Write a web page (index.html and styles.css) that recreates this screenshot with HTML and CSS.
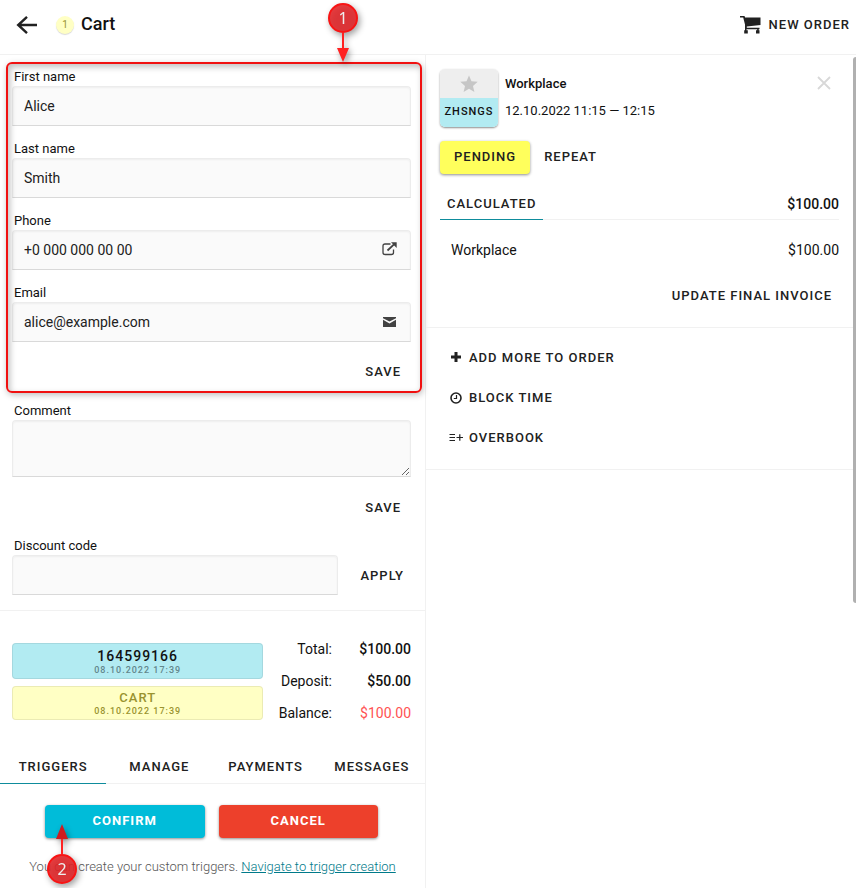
FILE: index.html
```html
<!DOCTYPE html>
<html lang="en">
<head>
  <meta charset="UTF-8">
  <meta name="viewport" content="width=device-width, initial-scale=1.0">
  <title>Cart</title>
  <link rel="stylesheet" href="styles.css">
</head>
<body>
  <div class="app">
    <header class="topbar">
      <button class="icon-btn" type="button" aria-label="Back">
        <svg width="22" height="22" viewBox="0 0 22 22" fill="none" stroke="#212121" stroke-width="2.4"><path d="M21 11H2.5M11 2.800L2.200 11l8.800 8.200"/></svg>
      </button>
      <span class="count">1</span>
      <h1 class="title">Cart</h1>
      <button class="new-order" type="button">
        <svg width="21" height="18" viewBox="0 0 21 18" fill="#212121"><path d="M0 0h4.500l.6 1.600H20.500v7.400L6.800 10.600v1.200H19.500v1.400H5V8.500L3.200 1.600H0z"/><path d="M5 13h1.500v1.300h1.300v3.200H4.200v-3.200H5zM17.200 13h1.500v1.300h.8v3.200H16v-3.200h1.200z"/></svg>
        New order
      </button>
    </header>

    <main class="columns">
      <div class="left">
        <form class="contact">
          <div class="field">
            <label for="first">First name</label>
            <input id="first" class="input" type="text" value="Alice">
          </div>
          <div class="field">
            <label for="last">Last name</label>
            <input id="last" class="input" type="text" value="Smith">
          </div>
          <div class="field">
            <label for="phone">Phone</label>
            <input id="phone" class="input" type="tel" value="+0 000 000 00 00">
            <svg class="field-icon" width="15" height="14" viewBox="0 0 15 14" fill="none" stroke="#424242" stroke-width="1.3"><path d="M8.5 2H3Q1 2 1 4v6.5q0 2 2 2h6.500q2 0 2-2V7.500"/><path d="M5.500 8.500L12 2.400" stroke-width="1.800"/><path d="M9 .3h5.700V6z" fill="#424242" stroke="none"/></svg>
          </div>
          <div class="field">
            <label for="email">Email</label>
            <input id="email" class="input" type="email" value="alice@example.com">
            <svg class="field-icon" width="15" height="12" viewBox="0 0 15 12" fill="#424242"><path d="M1 1h13v1.200L7.500 5.600 1 2.200z"/><path d="M1 3.800l6.500 3.800L14 3.800V11H1z"/></svg>
          </div>
          <div class="actions">
            <button class="flat" type="button">Save</button>
          </div>
          <div class="highlight"></div>
        </form>

        <form class="extra">
          <label for="comment">Comment</label>
          <textarea id="comment" class="input"></textarea>
          <div class="actions">
            <button class="flat" type="button">Save</button>
          </div>
          <label for="discount">Discount code</label>
          <div class="discount">
            <input id="discount" class="input" type="text">
            <button class="flat" type="button">Apply</button>
          </div>
        </form>

        <section class="summary">
          <div class="statuses">
            <div class="status status-id"><b>164599166</b><small>08.10.2022 17:39</small></div>
            <div class="status status-cart"><b>CART</b><small>08.10.2022 17:39</small></div>
          </div>
          <table class="totals">
            <tr><th>Total:</th><td>$100.00</td></tr>
            <tr><th>Deposit:</th><td>$50.00</td></tr>
            <tr><th>Balance:</th><td class="due">$100.00</td></tr>
          </table>
        </section>

        <nav class="tabs">
          <button class="tab active" type="button">Triggers</button>
          <button class="tab" type="button">Manage</button>
          <button class="tab" type="button">Payments</button>
          <button class="tab" type="button">Messages</button>
        </nav>

        <div class="triggers">
          <button class="solid confirm" type="button">Confirm</button>
          <button class="solid cancel" type="button">Cancel</button>
        </div>
        <p class="hint">You can create your custom triggers. <a href="#">Navigate to trigger creation</a></p>
      </div>

      <div class="right">
        <section class="order">
          <div class="order-head">
            <div class="tile">
              <div class="tile-star">
                <svg width="18" height="18" viewBox="0 0 18 18" fill="#c6c6c6"><path d="M9 .5l2.500 5.700 6.200.6-4.700 4.100 1.400 6.100L9 13.800 3.600 17 5 10.900.3 6.800l6.200-.6z"/></svg>
              </div>
              <div class="tile-code">ZHSNGS</div>
            </div>
            <div class="order-info">
              <h2>Workplace</h2>
              <p>12.10.2022 11:15 — 12:15</p>
            </div>
            <button class="icon-btn close" type="button" aria-label="Remove">
              <svg width="14" height="14" viewBox="0 0 14 14" fill="none" stroke="#d8d8d8" stroke-width="1.800"><path d="M1 1l12 12M13 1L1 13"/></svg>
            </button>
          </div>
          <div class="order-status">
            <button class="solid pending" type="button">Pending</button>
            <button class="flat" type="button">Repeat</button>
          </div>
          <div class="calc">
            <button class="calc-tab" type="button">Calculated</button>
            <strong>$100.00</strong>
          </div>
          <div class="line">
            <span>Workplace</span>
            <span>$100.00</span>
          </div>
          <div class="actions">
            <button class="flat" type="button">Update final invoice</button>
          </div>
        </section>

        <section class="more">
          <button class="more-btn" type="button">
            <svg width="14" height="12" viewBox="0 0 14 12" fill="#212121"><path d="M5.500 0h3v3.500H12v3H8.500V10h-3V6.500H2v-3h3.500z"/></svg>
            Add more to order
          </button>
          <button class="more-btn" type="button">
            <svg width="14" height="14" viewBox="0 0 14 14" fill="none" stroke="#212121"><circle cx="7" cy="7" r="5" stroke-width="1.600"/><path d="M7.500 4v3.500H4.800" stroke-width="1.200"/></svg>
            Block time
          </button>
          <button class="more-btn" type="button">
            <svg width="14" height="12" viewBox="0 0 14 12" fill="none" stroke="#212121" stroke-width="1.200"><path d="M.5 2.500h5.500M.5 5.500h5.500M.5 8.500h5.500M7.500 5.500H14M10.800 2.300v6.400"/></svg>
            Overbook
          </button>
        </section>
        <div class="scrollbar"></div>
      </div>
    </main>

    <!-- step markers -->
    <div class="marker marker-one">
      <span>1</span>
      <svg width="12" height="30" viewBox="0 0 12 30" fill="#f22"><path d="M5 0h2v15h5L6 29 0 15h5z"/></svg>
    </div>
    <div class="marker marker-two">
      <svg width="12" height="30" viewBox="0 0 12 30"><path d="M5 15h2v15H5z" fill="#f22"/><path d="M6 0l6 15H0z" fill="#d01c20"/></svg>
      <span>2</span>
    </div>
  </div>
</body>
</html>
```
FILE: styles.css
```css
* {
  box-sizing: border-box;
}
body {
  margin: 0;
  font-family: Roboto, "Liberation Sans", sans-serif;
  font-size: 14px;
  color: #111;
  background: #fff;
}
button {
  font-family: inherit;
  font-size: 13px;
  font-weight: 500;
  letter-spacing: 1px;
  text-transform: uppercase;
  color: #212121;
  background: none;
  border: none;
  padding: 0;
  cursor: pointer;
}
svg {
  display: block;
  flex: none;
}
.app {
  position: relative;
  display: flex;
  flex-direction: column;
  min-height: 100vh;
}

/* header */
.topbar {
  display: flex;
  align-items: center;
  height: 55px;
  padding: 0 6px 5px 16px;
  border-bottom: 1px solid #f1f1f1;
}
.count {
  width: 18px;
  height: 18px;
  margin: 0 7px 0 18px;
  border-radius: 50%;
  background: #ffffc4;
  box-shadow: 0 1px 1px rgba(0, 0, 0, 0.15);
  color: #99932f;
  font-size: 10px;
  line-height: 17px;
  text-align: center;
}
.title {
  margin: 0;
  padding-bottom: 2px;
  font-size: 18px;
  font-weight: 500;
  line-height: 24px;
}
.new-order {
  display: flex;
  align-items: center;
  gap: 8px;
  margin-left: auto;
}

/* columns */
.columns {
  flex: 1;
  display: flex;
}
.left {
  flex: 0 0 calc(50% - 2px);
  border-right: 1px solid #f1f1f1;
}
.right {
  position: relative;
  flex: 1;
}

/* forms */
label {
  display: block;
  padding: 2px 0 0 2px;
  font-size: 13px;
  line-height: 18px;
}
.input {
  display: block;
  width: 100%;
  height: 40px;
  padding: 0 11px;
  border: 1px solid #ececec;
  border-bottom-color: #d9d9d9;
  border-radius: 4px 4px 0 0;
  background: #fafafa;
  box-shadow: inset 0 1px 2px rgba(0, 0, 0, 0.05);
  font-family: inherit;
  font-size: 14px;
  color: #212121;
}
.contact {
  position: relative;
  padding: 11px 14px 5px 12px;
}
.field {
  position: relative;
  margin-bottom: 12px;
}
.field-icon {
  position: absolute;
  right: 14px;
  bottom: 14px;
}
.actions {
  display: flex;
  justify-content: flex-end;
  padding-top: 1px;
}
.flat {
  height: 33px;
  padding: 0 10px;
}
.highlight {
  position: absolute;
  inset: 7px 3px 0 6px;
  border: 2px solid #f01010;
  border-radius: 6px;
  box-shadow: 1px 2px 6px rgba(0, 0, 0, 0.25), inset 2px 3px 6px rgba(0, 0, 0, 0.25);
  pointer-events: none;
}
.extra {
  padding: 7px 14px 15px 12px;
  border-bottom: 1px solid #f1f1f1;
}
.extra textarea {
  height: 57px;
  resize: vertical;
}
.extra .actions {
  padding: 14px 0 11px;
}
.discount {
  display: flex;
  gap: 12px;
}
.discount .input {
  flex: 1;
}
.discount .flat {
  height: 40px;
  padding: 0 7px 0 10px;
}

/* order summary */
.summary {
  display: flex;
  padding: 22px 14px 0 12px;
}
.statuses {
  flex: 0 0 63%;
  display: flex;
  flex-direction: column;
  gap: 7px;
  padding-top: 10px;
}
.status {
  padding: 4px 0 2px;
  border: 1px solid rgba(0, 0, 0, 0.08);
  border-radius: 4px;
  text-align: center;
}
.status b,
.status small {
  display: block;
  font-weight: 500;
}
.status b {
  font-size: 14px;
  line-height: 16px;
  letter-spacing: 1px;
}
.status small {
  font-size: 9px;
  line-height: 12px;
  letter-spacing: 1px;
}
.status-id {
  background: #b2ebf2;
}
.status-id small {
  color: #62868b;
}
.status-cart {
  background: #ffffc4;
  color: #99932f;
}
.status-cart b {
  font-size: 13px;
  line-height: 14px;
}
.totals {
  flex: 1;
  border-collapse: collapse;
}
.totals th,
.totals td {
  height: 32px;
  padding: 0;
  text-align: right;
  font-weight: 400;
}
.totals td {
  width: 79px;
  font-weight: 500;
}
.totals .due {
  color: #ff5252;
  font-weight: 400;
}

/* tabs */
.tabs {
  display: flex;
  height: 35px;
  margin-top: 20px;
  border-bottom: 1px solid #f1f1f1;
}
.tab {
  flex: 1;
  height: 35px;
  border-bottom: 1px solid transparent;
}
.tab.active {
  border-color: #0e8c9c;
}

/* triggers */
.triggers {
  display: flex;
  gap: 14px;
  padding: 21px 47px 0 45px;
}
.solid {
  height: 33px;
  padding-bottom: 2px;
  border-radius: 4px;
  box-shadow: 0 1px 3px rgba(0, 0, 0, 0.45);
}
.triggers .solid {
  flex: 1;
  color: #fff;
  font-weight: 700;
}
.confirm {
  background: #00bcd9;
}
.cancel {
  background: #ed402b;
}
.hint {
  margin: 19px 0 0;
  font-size: 13px;
  font-weight: 300;
  line-height: 20px;
  text-align: center;
  color: #555;
}
.hint a {
  color: #007a8a;
}

/* order */
.order {
  padding: 14px 17px 15px 14px;
  border-bottom: 1px solid #f1f1f1;
}
.order-head {
  display: flex;
  align-items: flex-start;
}
.tile {
  width: 58px;
  border-radius: 5px;
  overflow: hidden;
  box-shadow: 0 1px 2px rgba(0, 0, 0, 0.45);
}
.tile-star {
  display: flex;
  justify-content: center;
  height: 29px;
  padding-top: 6px;
  background: #eee;
}
.tile-code {
  height: 29px;
  background: #b2ebf2;
  font-size: 11px;
  font-weight: 500;
  line-height: 27px;
  letter-spacing: 1px;
  text-align: center;
}
.order-info {
  flex: 1;
  padding: 5px 0 0 7px;
  font-size: 13px;
}
.order-info h2 {
  margin: 0;
  font-size: 13px;
  font-weight: 500;
  line-height: 20px;
}
.order-info p {
  margin: 7px 0 0;
  line-height: 20px;
}
.close {
  margin: 7px 8px 0 0;
}
.order-status {
  display: flex;
  gap: 4px;
  margin-top: 14px;
}
.order-status .flat {
  padding-bottom: 2px;
}
.pending {
  padding: 0 14px 2px;
  background: #ffff5c;
}
.calc {
  display: flex;
  align-items: center;
  justify-content: space-between;
  height: 32px;
  margin-top: 14px;
  border-bottom: 1px solid #f1f1f1;
}
.calc strong {
  font-weight: 500;
}
.calc-tab {
  height: 33px;
  padding: 0 7px;
  border-bottom: 1px solid #0e8c9c;
}
.line {
  display: flex;
  justify-content: space-between;
  padding: 20px 0 18px 11px;
  line-height: 20px;
}
.order .actions .flat {
  padding: 0 7px;
}
.more {
  display: flex;
  flex-direction: column;
  align-items: flex-start;
  gap: 7px;
  padding: 13px 23px 15px;
  border-bottom: 1px solid #f1f1f1;
}
.more-btn {
  display: flex;
  align-items: center;
  gap: 6px;
  height: 33px;
}
.scrollbar {
  position: absolute;
  top: 2px;
  right: 0;
  width: 3px;
  height: 546px;
  border-radius: 3px 0 0 3px;
  background: #b0b0b0;
}

/* step markers */
.marker {
  position: absolute;
  display: flex;
  flex-direction: column;
  align-items: center;
  filter: drop-shadow(2px 3px 3px rgba(0, 0, 0, 0.4));
}
.marker span {
  width: 30px;
  height: 30px;
  border: 2px solid #f81414;
  border-radius: 50%;
  background: rgba(226, 36, 40, 0.88);
  color: #eee;
  font-family: "Noto Sans", "Open Sans", sans-serif;
  font-size: 16px;
  line-height: 26px;
  text-align: center;
}
.marker-one {
  top: 3px;
  left: 328px;
}
.marker-two {
  top: 824px;
  left: 47px;
}
```
